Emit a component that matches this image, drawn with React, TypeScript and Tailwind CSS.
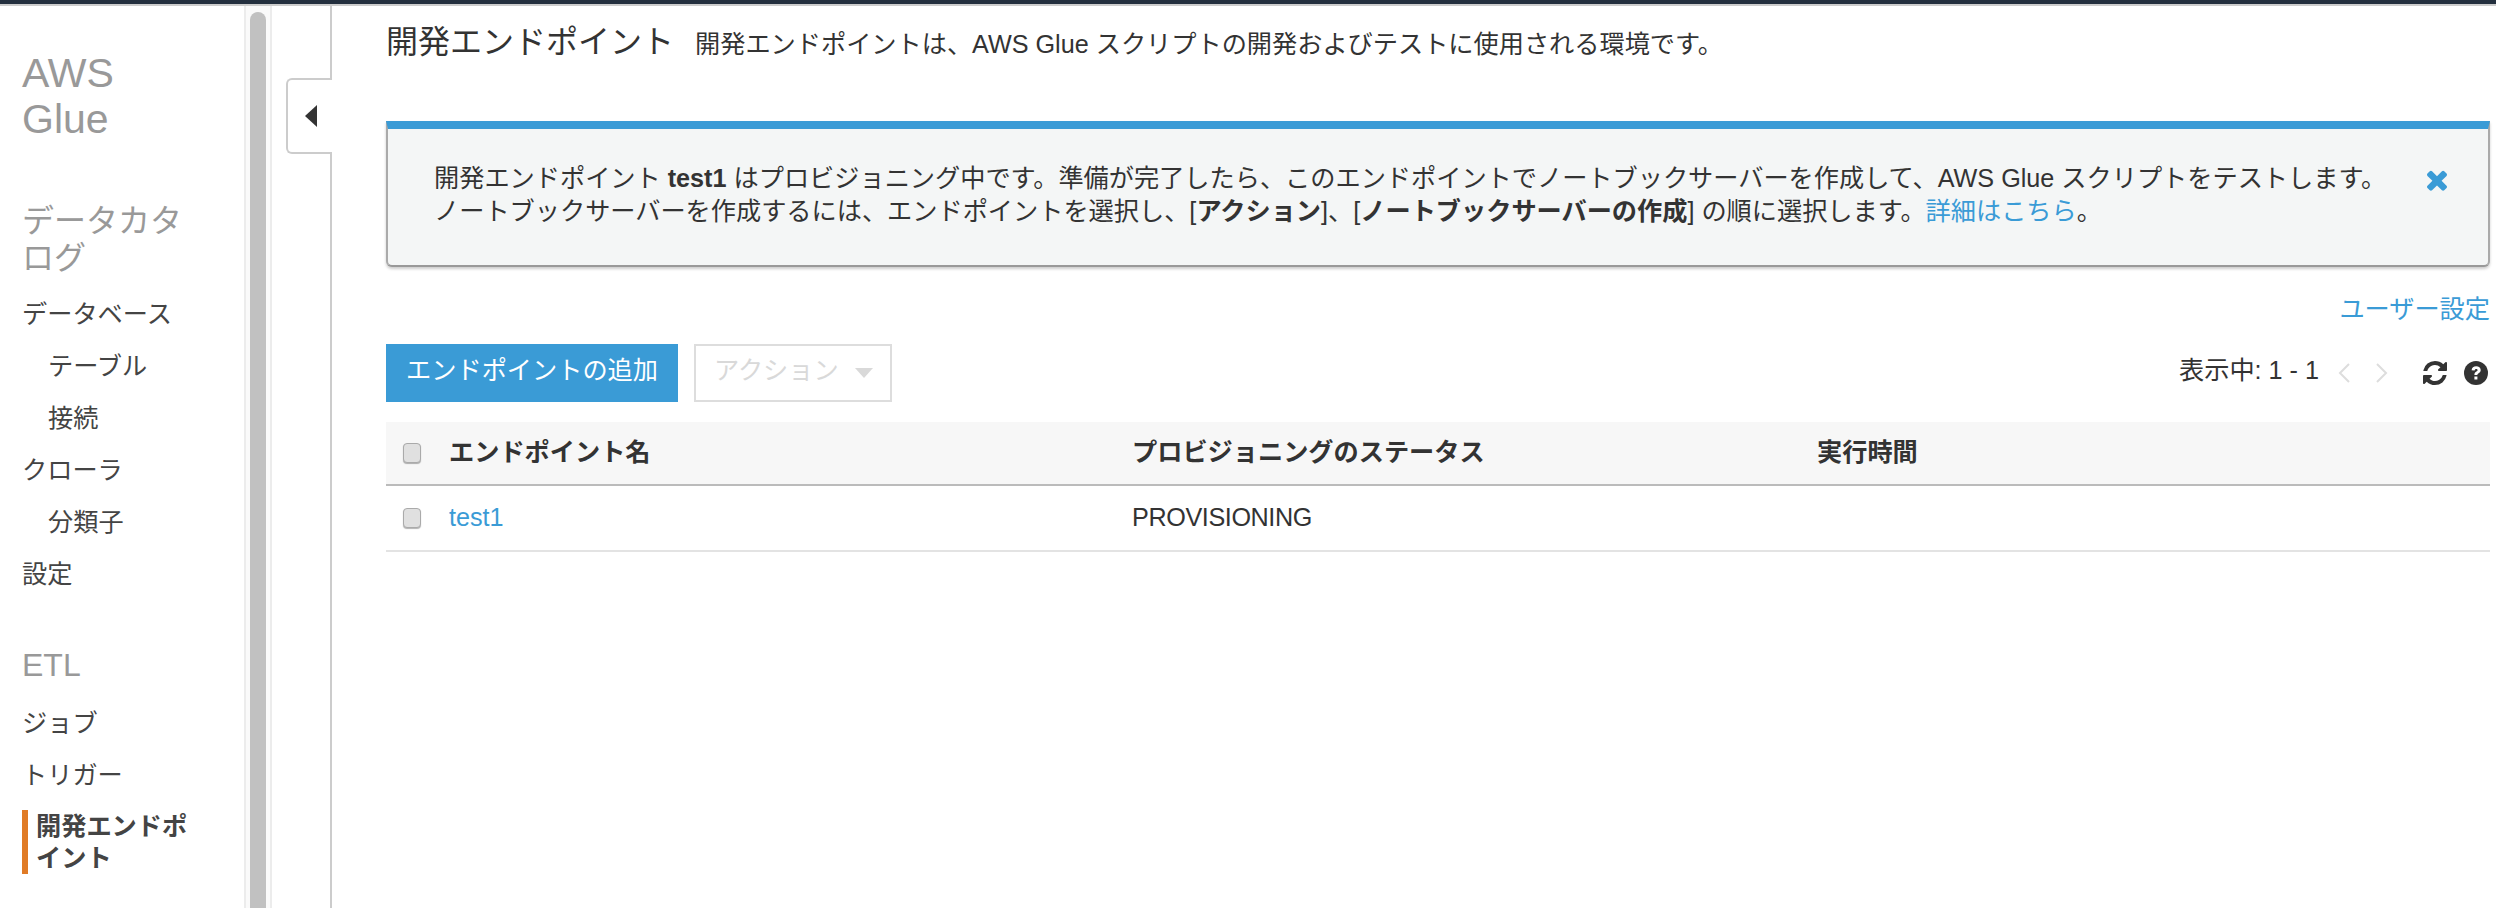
const font = "font-['Liberation_Sans','Noto_Sans_CJK_JP',sans-serif]";

const NavItem = ({ label, sub }: { label: string; sub?: boolean }) => {
  return (
    <div
      className={`flex h-[52px] items-center text-[25.2px] text-[#444] ${sub ? "pl-[48px]" : "pl-[22px]"}`}
    >
      {label}
    </div>
  );
};

const Sidebar = () => {
  return (
    <div className="flex h-full w-[244px] shrink-0 flex-col overflow-hidden">
      <div className="mt-[44px] w-[200px] pl-[22px] text-[41px] leading-[46px] text-[#999]">
        AWS Glue
      </div>
      <div className="mt-[61px] w-[190px] pl-[22px] text-[32px] leading-[37px] text-[#999]">
        データカタログ
      </div>
      <div className="mt-[12px]">
        <NavItem label="データベース" />
        <NavItem label="テーブル" sub />
        <NavItem label="接続" sub />
        <NavItem label="クローラ" />
        <NavItem label="分類子" sub />
        <NavItem label="設定" />
      </div>
      <div className="mt-[46px] pl-[22px] text-[32px] leading-[36px] text-[#999]">
        ETL
      </div>
      <div className="mt-[15px]">
        <NavItem label="ジョブ" />
        <NavItem label="トリガー" />
      </div>
      <div className="ml-[22px] mt-[8px] w-[172px] border-l-[6px] border-[#e07b26] pl-[8px] text-[25.2px] font-bold leading-[32px] text-[#444]">
        開発エンドポイント
      </div>
    </div>
  );
};

const Scrollbar = () => {
  return (
    <div className="flex h-full w-[28px] shrink-0 justify-center border-x-2 border-[#ececec] bg-[#fafafa] pt-[6px]">
      <div className="h-full w-[16px] rounded-t-full bg-[#c1c1c1]" />
    </div>
  );
};

const Collapse = () => {
  return (
    <div className="relative h-full w-[60px] shrink-0 border-r-2 border-[#ccc]">
      <div className="absolute right-[-2px] top-[72px] flex h-[76px] w-[46px] items-center rounded-l-[6px] border-2 border-r-0 border-[#ccc] bg-white pl-[16px]">
        <svg width="14" height="24" viewBox="0 0 14 24">
          <path d="M13 1V23L1 12Z" fill="#333" />
        </svg>
      </div>
    </div>
  );
};

const Notice = () => {
  return (
    <div className="relative mt-[57px] h-[146px] rounded-b-[6px] border-x-2 border-b-2 border-t-[8px] border-x-[#aaa] border-b-[#999] border-t-[#3a9bd6] bg-[#f4f6f6] pl-[46px] pt-[33px] text-[25.2px] leading-[33px] text-[#333] shadow-[0_2px_3px_rgba(0,0,0,0.2)]">
      <p>
        開発エンドポイント <b>test1</b>{" "}
        はプロビジョニング中です。準備が完了したら、このエンドポイントでノートブックサーバーを作成して、AWS
        Glue スクリプトをテストします。
      </p>
      <p>
        ノートブックサーバーを作成するには、エンドポイントを選択し、[<b>アクション</b>]、[
        <b>ノートブックサーバーの作成</b>] の順に選択します。
        <span className="text-[#3a9bd6]">詳細はこちら</span>。
      </p>
      <svg
        className="absolute right-[41px] top-[39px]"
        width="20"
        height="24"
        viewBox="110 266 1188 1288"
        fill="#3a9bd6"
      >
        <path d="M1298 1322q0 40-28 68l-136 136q-28 28-68 28t-68-28l-294-294-294 294q-28 28-68 28t-68-28l-136-136q-28-28-28-68t28-68l294-294-294-294q-28-28-28-68t28-68l136-136q28-28 68-28t68 28l294 294 294-294q28-28 68-28t68 28l136 136q28 28 28 68t-28 68l-294 294 294 294q28 28 28 68z" />
      </svg>
    </div>
  );
};

const Checkbox = () => {
  return (
    <div className="h-[20px] w-[18px] rounded-[4px] border border-[#aaa] bg-[#e0e0e0] shadow-[0_1px_1px_rgba(0,0,0,0.3)]" />
  );
};

const Table = () => {
  return (
    <div className="mt-[20px]">
      <div className="grid h-[64px] grid-cols-[63px_683px_685px_1fr] items-center border-b-2 border-[#bbb] bg-[#f7f7f7] text-[25.2px] font-bold text-[#333]">
        <div className="pl-[17px]">
          <Checkbox />
        </div>
        <div>エンドポイント名</div>
        <div>プロビジョニングのステータス</div>
        <div>実行時間</div>
      </div>
      <div className="grid h-[66px] grid-cols-[63px_683px_685px_1fr] items-center border-b-2 border-[#e3e3e3] text-[25.2px] text-[#333]">
        <div className="pl-[17px]">
          <Checkbox />
        </div>
        <div className="text-[#3a9bd6]">test1</div>
        <div className="tracking-[-0.4px]">PROVISIONING</div>
        <div />
      </div>
    </div>
  );
};

const Toolbar = () => {
  return (
    <div className="mt-[19px] flex h-[58px] items-center">
      <button className="h-[58px] w-[292px] bg-[#3a9bd6] pb-[5px] text-[25.2px] text-white">
        エンドポイントの追加
      </button>
      <button className="ml-[16px] flex h-[58px] w-[198px] items-center gap-[16px] border-2 border-[#ddd] pb-[5px] pl-[18px] text-[25.2px] text-[#d9d9d9]">
        アクション
        <svg className="mt-[5px]" width="18" height="10" viewBox="0 0 18 10">
          <path d="M0 0H18L9 10Z" fill="#d9d9d9" />
        </svg>
      </button>
      <div className="ml-auto flex items-center text-[25.2px] text-[#333]">
        <span className="pb-[5px]">表示中: 1 - 1</span>
        <svg className="ml-[18px]" width="14" height="22" viewBox="0 0 14 22" fill="none" stroke="#ddd" strokeWidth="2">
          <path d="M12 2L3 11L12 20" />
        </svg>
        <svg className="ml-[24px]" width="14" height="22" viewBox="0 0 14 22" fill="none" stroke="#ddd" strokeWidth="2">
          <path d="M2 2L11 11L2 20" />
        </svg>
        <svg className="ml-[34px]" width="24" height="24" viewBox="128 128 1536 1536" fill="#333">
          <path d="M1639 1056q0 5-1 7-64 268-268 434.5t-478 166.5q-146 0-282.5-55t-243.5-157l-129 129q-19 19-45 19t-45-19-19-45v-448q0-26 19-45t45-19h448q26 0 45 19t19 45-19 45l-137 137q71 66 161 102t187 36q134 0 250-65t186-179q11-17 53-117 8-23 30-23h192q13 0 22.5 9.5t9.5 22.5zm25-800v448q0 26-19 45t-45 19h-448q-26 0-45-19t-19-45 19-45l138-138q-148-137-349-137-134 0-250 65t-186 179q-11 17-53 117-8 23-30 23h-199q-13 0-22.5-9.5t-9.5-22.5v-7q65-268 270-434.5t480-166.5q146 0 284 55.5t245 156.5l130-129q19-19 45-19t45 19 19 45z" />
        </svg>
        <svg className="ml-[17px] mr-[2px]" width="24" height="24" viewBox="0 0 24 24">
          <circle cx="12" cy="12" r="12" fill="#333" />
          <path d="M7.6 9.2C7.8 6.7 9.6 5.2 12.2 5.2c2.6 0 4.5 1.6 4.5 3.8 0 1.7-1 2.6-2.1 3.3-.9.6-1.2.9-1.2 1.7H10.4c0-1.7.6-2.5 1.7-3.2.9-.6 1.5-1 1.5-1.7 0-.7-.6-1.2-1.4-1.2-.9 0-1.5.6-1.6 1.6L7.6 9.2zM10.4 15.6h3v3h-3z" fill="#fff" />
        </svg>
      </div>
    </div>
  );
};

export default function App() {
  return (
    <div className={`flex h-screen w-full flex-col overflow-hidden bg-white ${font}`}>
      <div className="h-[6px] shrink-0 border-b-2 border-[#ccc] bg-[#232f3e]" />
      <div className="flex min-h-0 flex-1">
        <Sidebar />
        <Scrollbar />
        <Collapse />
        <div className="min-w-0 flex-1 pl-[54px] pr-[6px]">
          <div className="mt-[14px] flex h-[44px] items-center gap-[21px]">
            <h1 className="text-[32px] text-[#333]">開発エンドポイント</h1>
            <p className="pt-[6px] text-[25.2px] text-[#333]">
              開発エンドポイントは、AWS Glue スクリプトの開発およびテストに使用される環境です。
            </p>
          </div>
          <Notice />
          <div className="mt-[26px] text-right text-[25.2px] leading-[32px] text-[#3a9bd6]">
            ユーザー設定
          </div>
          <Toolbar />
          <Table />
        </div>
      </div>
    </div>
  );
}
